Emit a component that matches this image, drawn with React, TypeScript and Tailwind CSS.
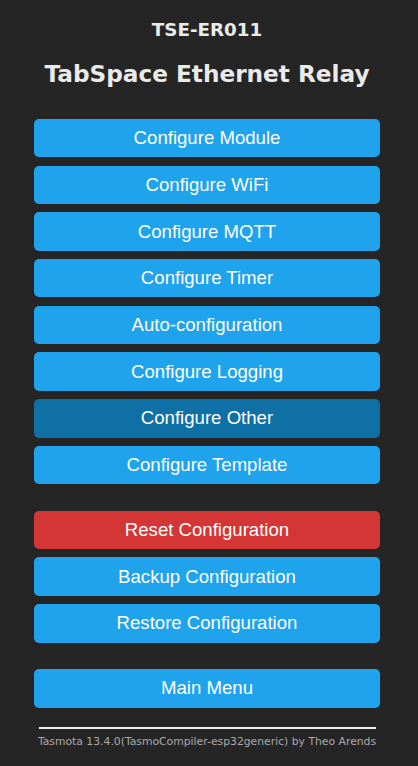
const groups: { label: string; tone?: 'dark' | 'red' }[][] = [
  [
    { label: 'Configure Module' },
    { label: 'Configure WiFi' },
    { label: 'Configure MQTT' },
    { label: 'Configure Timer' },
    { label: 'Auto-configuration' },
    { label: 'Configure Logging' },
    { label: 'Configure Other', tone: 'dark' },
    { label: 'Configure Template' },
  ],
  [
    { label: 'Reset Configuration', tone: 'red' },
    { label: 'Backup Configuration' },
    { label: 'Restore Configuration' },
  ],
  [{ label: 'Main Menu' }],
];

function TasButton({ label, tone }: { label: string; tone?: 'dark' | 'red' }) {
  const bg = tone === 'red' ? 'bg-[#d43535]' : tone === 'dark' ? 'bg-[#0e70a4]' : 'bg-[#1fa3ec]';
  return (
    <button
      className={`w-full h-[38.4px] rounded-[5px] text-[18.6px] text-white ${bg}`}
      style={{ fontFamily: '"Liberation Sans", Arial, sans-serif' }}
    >
      {label}
    </button>
  );
}

export default function App() {
  return (
    <div
      className="min-h-[766px] bg-[#252525] text-[#eaeaea] pl-[34px]"
      style={{ fontFamily: '"DejaVu Sans", Verdana, sans-serif' }}
    >
      <div className="w-[346px] flex flex-col items-center">
        <h3 className="mt-[19px] text-[18.3px] font-bold leading-[22px]">TSE-ER011</h3>
        <h2 className="mt-[18px] text-[23.2px] font-bold leading-[29px]">TabSpace Ethernet Relay</h2>

        <div className="mt-[31px] w-full flex flex-col gap-[26.6px]">
          {groups.map((g, i) => (
            <div key={i} className="flex flex-col gap-[8.3px]">
              {g.map(b => (
                <TasButton key={b.label} label={b.label} tone={b.tone} />
              ))}
            </div>
          ))}
        </div>

        <div className="mt-[19px] w-[337px] h-[2px] bg-[#eaeaea]" />
        <p className="mt-[6px] text-[10.8px] text-[#aaaaaa] leading-[14px] whitespace-nowrap">
          Tasmota 13.4.0(TasmoCompiler-esp32generic) by Theo Arends
        </p>
      </div>
    </div>
  );
}
